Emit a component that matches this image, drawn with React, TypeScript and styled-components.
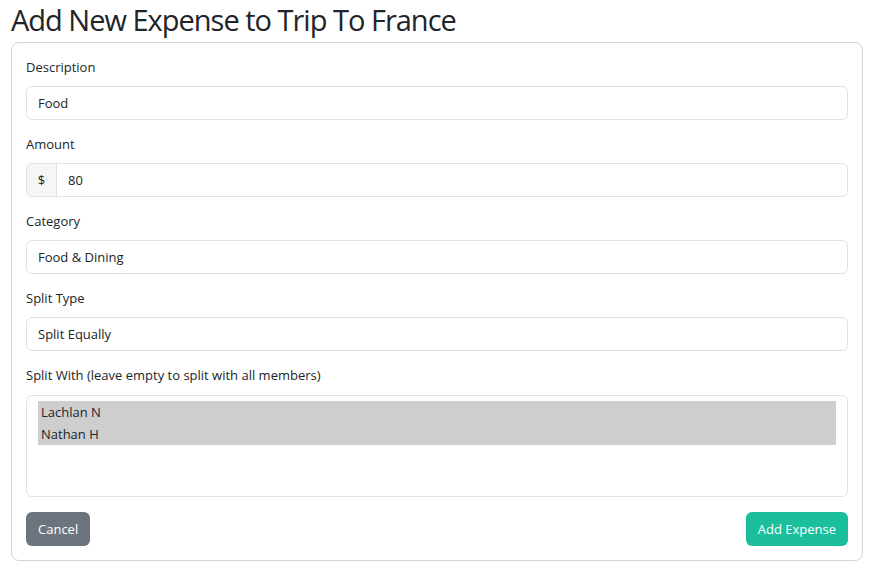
import React from "react";
import styled, { createGlobalStyle } from "styled-components";

const Global = createGlobalStyle`
  html, body { margin: 0; padding: 0; background: #ffffff; }
  body {
    font-family: "Open Sans", "Noto Sans", sans-serif;
    color: #212529;
  }
  * { box-sizing: border-box; }
`;

const Page = styled.div`
  padding: 0 11px;
`;

const Title = styled.h1`
  margin: 0 0 2px;
  font-size: 29px;
  line-height: 40px;
  font-weight: 400;
  color: #212529;
  letter-spacing: -1px;
  white-space: nowrap;
`;

const Card = styled.form`
  border: 1px solid #d4d4d4;
  border-radius: 8px;
  padding: 14px;
  display: flex;
  flex-direction: column;
`;

const Group = styled.div<{ $tall?: boolean }>`
  display: flex;
  flex-direction: column;
  margin-bottom: ${(p) => (p.$tall ? "15px" : "14px")};
`;

const Label = styled.label`
  font-size: 13px;
  line-height: 21px;
  margin-bottom: 8px;
`;

const Control = styled.div`
  height: 34px;
  border: 1px solid #dee2e6;
  border-radius: 6px;
  padding: 0 11px;
  display: flex;
  align-items: center;
  font-size: 13px;
  color: #212529;
  background: #fff;
`;

const InputGroup = styled.div`
  display: flex;
  height: 34px;
`;

const Addon = styled.span`
  width: 31px;
  display: flex;
  align-items: center;
  justify-content: center;
  border: 1px solid #dee2e6;
  border-radius: 6px 0 0 6px;
  background: #f5f6f8;
  font-size: 13px;
`;

const GroupControl = styled(Control)`
  flex: 1;
  border-left: none;
  border-radius: 0 6px 6px 0;
`;

const ListBox = styled.div`
  height: 102px;
  margin-top: 1px;
  border: 1px solid #dee2e6;
  border-radius: 6px;
  padding: 5px 11px 5px 11px;
  display: flex;
  flex-direction: column;
`;

const Option = styled.div<{ $selected?: boolean }>`
  height: 22px;
  line-height: 22px;
  padding: 0 3px;
  font-size: 13px;
  background: ${(p) => (p.$selected ? "#cecece" : "transparent")};
`;

const Actions = styled.div`
  display: flex;
  justify-content: space-between;
`;

const Button = styled.button<{ $variant: "secondary" | "success" }>`
  height: 34px;
  padding: 0 12px;
  border: none;
  border-radius: 6px;
  font-family: inherit;
  font-size: 13px;
  color: #fff;
  background: ${(p) => (p.$variant === "success" ? "#1bbf9c" : "#6c757d")};
  cursor: pointer;
`;

export default function App() {
  return (
    <Page>
      <Global />
      <Title>Add New Expense to Trip To France</Title>
      <Card onSubmit={(e) => e.preventDefault()}>
        <Group>
          <Label>Description</Label>
          <Control>Food</Control>
        </Group>
        <Group>
          <Label>Amount</Label>
          <InputGroup>
            <Addon>$</Addon>
            <GroupControl>80</GroupControl>
          </InputGroup>
        </Group>
        <Group>
          <Label>Category</Label>
          <Control>Food &amp; Dining</Control>
        </Group>
        <Group>
          <Label>Split Type</Label>
          <Control>Split Equally</Control>
        </Group>
        <Group $tall>
          <Label>Split With (leave empty to split with all members)</Label>
          <ListBox>
            <Option $selected>Lachlan N</Option>
            <Option $selected>Nathan H</Option>
          </ListBox>
        </Group>
        <Actions>
          <Button type="button" $variant="secondary">Cancel</Button>
          <Button type="submit" $variant="success">Add Expense</Button>
        </Actions>
      </Card>
    </Page>
  );
}
